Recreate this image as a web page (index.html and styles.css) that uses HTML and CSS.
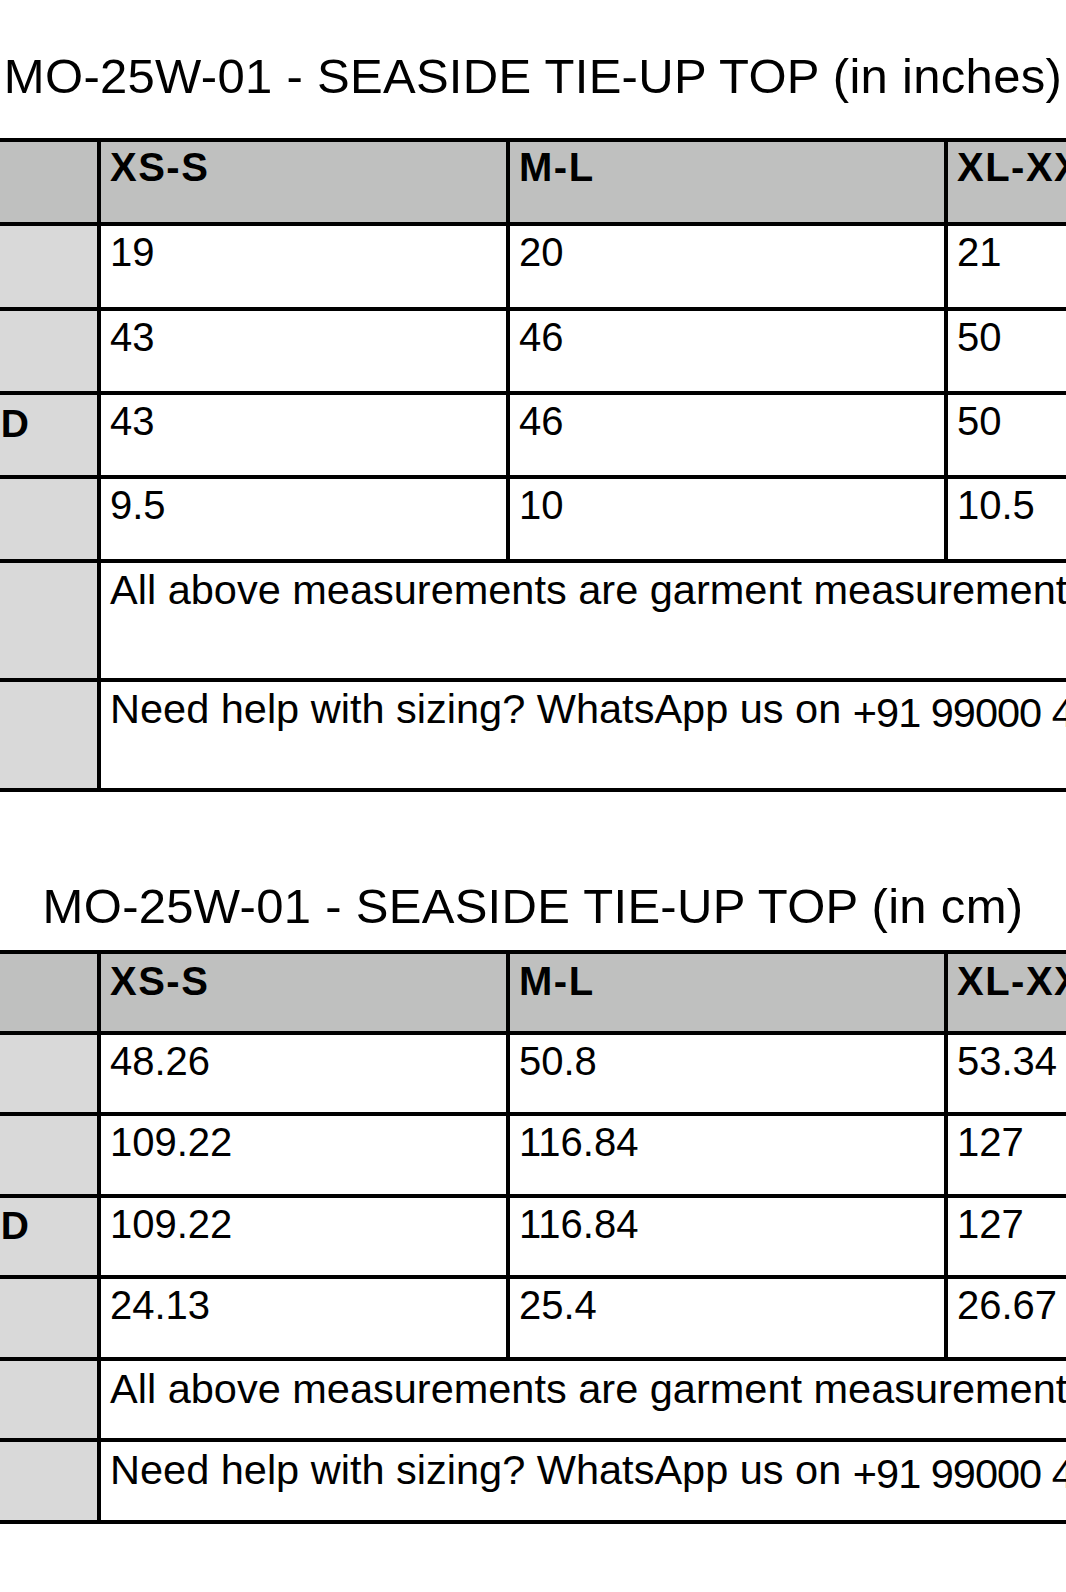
FILE: index.html
```html
<!DOCTYPE html>
<html lang="en">
<head>
<meta charset="utf-8">
<title>MO-25W-01 - SEASIDE TIE-UP TOP size chart</title>
<link rel="stylesheet" href="styles.css">
</head>
<body>
<main class="sheet">
  <h1 class="title title--inches">MO-25W-01 - SEASIDE TIE-UP TOP (in inches)</h1>
  <div class="chart chart--inches">
    <div class="cell head label"></div>
    <div class="cell head">XS-S</div>
    <div class="cell head">M-L</div>
    <div class="cell head">XL-XXL</div>

    <div class="cell label"></div>
    <div class="cell">19</div>
    <div class="cell">20</div>
    <div class="cell">21</div>

    <div class="cell label"></div>
    <div class="cell">43</div>
    <div class="cell">46</div>
    <div class="cell">50</div>

    <div class="cell label"><span class="label-text">D</span></div>
    <div class="cell">43</div>
    <div class="cell">46</div>
    <div class="cell">50</div>

    <div class="cell label"></div>
    <div class="cell">9.5</div>
    <div class="cell">10</div>
    <div class="cell">10.5</div>

    <div class="cell label"></div>
    <div class="cell note">All above measurements are garment measurements</div>

    <div class="cell label"></div>
    <div class="cell note">Need help with sizing? WhatsApp us on <span class="phone">+91 99000 4</span></div>
  </div>

  <h1 class="title title--cm">MO-25W-01 - SEASIDE TIE-UP TOP (in cm)</h1>
  <div class="chart chart--cm">
    <div class="cell head label"></div>
    <div class="cell head">XS-S</div>
    <div class="cell head">M-L</div>
    <div class="cell head">XL-XXL</div>

    <div class="cell label"></div>
    <div class="cell">48.26</div>
    <div class="cell">50.8</div>
    <div class="cell">53.34</div>

    <div class="cell label"></div>
    <div class="cell">109.22</div>
    <div class="cell">116.84</div>
    <div class="cell">127</div>

    <div class="cell label"><span class="label-text">D</span></div>
    <div class="cell">109.22</div>
    <div class="cell">116.84</div>
    <div class="cell">127</div>

    <div class="cell label"></div>
    <div class="cell">24.13</div>
    <div class="cell">25.4</div>
    <div class="cell">26.67</div>

    <div class="cell label"></div>
    <div class="cell note">All above measurements are garment measurements</div>

    <div class="cell label"></div>
    <div class="cell note">Need help with sizing? WhatsApp us on <span class="phone">+91 99000 4</span></div>
  </div>
</main>
</body>
</html>
```

FILE: styles.css
```css
html, body {
  margin: 0;
  padding: 0;
  background: #ffffff;
  overflow: hidden;
}

body {
  width: 1066px;
  height: 1592px;
  font-family: "Liberation Sans", Arial, Helvetica, sans-serif;
  color: #000000;
}

.sheet {
  display: flex;
  flex-direction: column;
}

.title {
  margin: 0;
  font-weight: normal;
  font-size: 49px;
  line-height: 49px;
  height: 49px;
  letter-spacing: 0.3px;
  text-align: center;
  white-space: nowrap;
}

.title--inches {
  margin-top: 52px;
}

.title--cm {
  margin-top: 90px;
}

.chart {
  display: grid;
  grid-template-columns: 97px 405px 434px 320px;
  gap: 4px;
  padding: 4px 0;
  background: #000000;
  width: max-content;
}

.chart--inches {
  margin-top: 37px;
  grid-template-rows: 80px 81px 80px 80px 80px 115px 106px;
}

.chart--cm {
  margin-top: 19px;
  grid-template-rows: 77px 77px 78px 77px 78px 77px 78px;
}

.cell {
  background: #ffffff;
  font-size: 40px;
  line-height: 40px;
  padding: 6px 9px 0 9px;
  white-space: nowrap;
  overflow: hidden;
}

.head {
  background: #bfc0bf;
  font-weight: bold;
  letter-spacing: 1.5px;
}

.chart--inches .head {
  padding-top: 5px;
}

.chart--cm .head {
  padding-top: 7px;
}

.label {
  background: #d9d9d9;
  padding: 0;
  display: flex;
  justify-content: flex-end;
  align-items: flex-start;
}

.label.head {
  background: #bfc0bf;
}

.label-text {
  font-weight: bold;
  font-size: 39px;
  line-height: 39px;
  padding-top: 9px;
  padding-right: 68px;
}

.chart--cm .label-text {
  padding-top: 8px;
}

.note {
  grid-column: span 3;
  font-size: 41.5px;
  line-height: 42px;
}

.chart--cm .note {
  padding-top: 7px;
}

.phone {
  letter-spacing: -1px;
  position: relative;
  top: 4px;
}
```
